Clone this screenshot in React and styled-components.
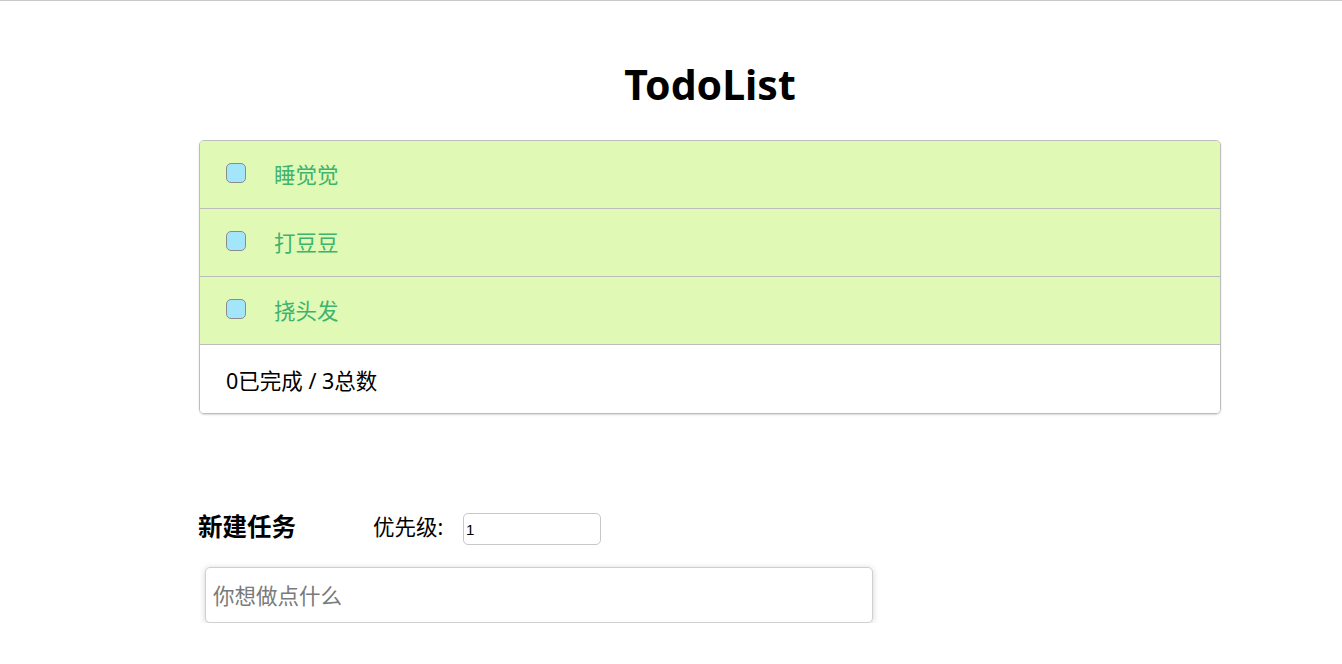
import React, { useState } from 'react';
import styled, { createGlobalStyle } from 'styled-components';

const GlobalStyle = createGlobalStyle`
  html, body {
    margin: 0;
    padding: 0;
    background: #fff;
  }
  body {
    border-top: 1px solid #c8c8c8;
    font-family: "Noto Sans", "Noto Sans CJK SC", sans-serif;
    color: #000;
  }
`;

const Page = styled.div`
  width: 1022px;
  margin-left: 199px;
  padding-top: 55px;
`;

const Title = styled.h1`
  margin: 0 0 28px;
  text-align: center;
  font-size: 41px;
  font-weight: 700;
  line-height: 56px;
`;

const ListBox = styled.div`
  border: 1px solid #bdbdbd;
  border-radius: 5px;
  box-shadow: 0 1px 2px rgba(0, 0, 0, 0.15);
  overflow: hidden;
`;

const Row = styled.label`
  display: flex;
  align-items: center;
  height: 67px;
  padding-left: 26px;
  background: ${(props) => (props.done ? '#f2f2f2' : '#e0fab6')};
  border-bottom: 1px solid #bdbdbd;
  cursor: pointer;
`;

const Check = styled.span`
  width: 18px;
  height: 18px;
  border: 1px solid #8c8c8c;
  border-radius: 5px;
  background: ${(props) => (props.checked ? '#3cb371' : '#a3e6fa')};
  margin-top: -3px;
`;

const ItemText = styled.span`
  margin-left: 28px;
  margin-top: -2px;
  font-size: 21.5px;
  color: #3fb26d;
  text-decoration: ${(props) => (props.done ? 'line-through' : 'none')};
`;

const Footer = styled.div`
  height: 68px;
  display: flex;
  align-items: center;
  padding-left: 26px;
  font-size: 21.5px;
  background: #fff;
`;

const NewTask = styled.div`
  margin-top: 98px;
  display: flex;
  align-items: center;
  height: 34px;
`;

const NewTitle = styled.h3`
  margin: 0 0 7px -1px;
  width: 175px;
  font-size: 24.5px;
  font-weight: 700;
`;

const Label = styled.span`
  margin-bottom: 7px;
  font-size: 21.5px;
  width: 90px;
`;

const PriorityInput = styled.input`
  width: 132px;
  height: 30px;
  box-sizing: content-box;
  padding: 0 2px;
  border: 1px solid #c8c8c8;
  border-radius: 5px;
  font-family: "Liberation Sans", sans-serif;
  font-size: 15px;
  color: #000;
  outline: none;
`;

const TaskInput = styled.input`
  display: block;
  margin: 21px 0 0 6px;
  width: 668px;
  height: 56px;
  box-sizing: border-box;
  padding: 0 7px;
  border: 1px solid #cfcfcf;
  border-radius: 5px;
  box-shadow: 0 1px 6px rgba(0, 0, 0, 0.18);
  font-family: "Noto Sans", "Noto Sans CJK SC", sans-serif;
  font-size: 21.5px;
  outline: none;
  &::placeholder {
    color: #7a7a7a;
  }
`;

const initial = [
  { id: 1, text: '睡觉觉', done: false },
  { id: 2, text: '打豆豆', done: false },
  { id: 3, text: '挠头发', done: false },
];

export default function App() {
  const [todos, setTodos] = useState(initial);
  const [priority, setPriority] = useState('1');
  const [text, setText] = useState('');

  const toggle = (id) =>
    setTodos(todos.map((t) => (t.id === id ? { ...t, done: !t.done } : t)));

  const add = (e) => {
    if (e.key === 'Enter' && text.trim()) {
      setTodos([...todos, { id: Date.now(), text: text.trim(), done: false }]);
      setText('');
    }
  };

  const doneCount = todos.filter((t) => t.done).length;

  return (
    <>
      <GlobalStyle />
      <Page>
        <Title>TodoList</Title>
        <ListBox>
          {todos.map((t) => (
            <Row key={t.id} onClick={() => toggle(t.id)}>
              <Check checked={t.done} />
              <ItemText done={t.done}>{t.text}</ItemText>
            </Row>
          ))}
          <Footer>
            {doneCount}已完成 / {todos.length}总数
          </Footer>
        </ListBox>
        <NewTask>
          <NewTitle>新建任务</NewTitle>
          <Label>优先级:</Label>
          <PriorityInput
            value={priority}
            onChange={(e) => setPriority(e.target.value)}
          />
        </NewTask>
        <TaskInput
          placeholder="你想做点什么"
          value={text}
          onChange={(e) => setText(e.target.value)}
          onKeyDown={add}
        />
      </Page>
    </>
  );
}
